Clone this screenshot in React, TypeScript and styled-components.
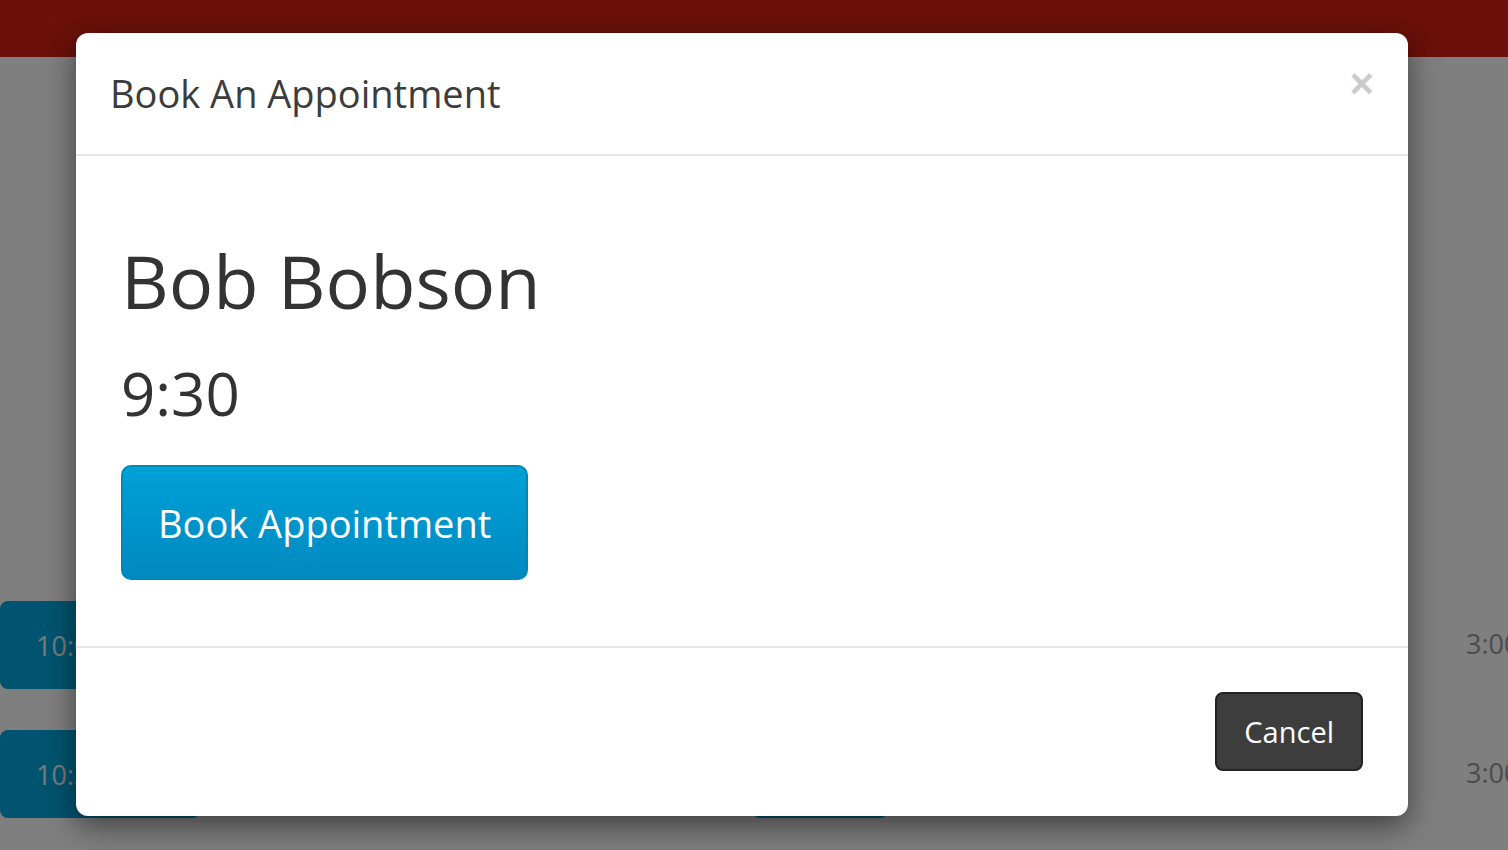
import React from "react";
import styled, { createGlobalStyle } from "styled-components";

const GlobalStyle = createGlobalStyle`
  html, body { margin: 0; padding: 0; }
  body {
    font-family: "Open Sans", "Liberation Sans", sans-serif;
    background: #ffffff;
    color: #333333;
    overflow: hidden;
  }
  * { box-sizing: border-box; }
`;

const Page = styled.div`
  width: 1508px;
  height: 850px;
  position: relative;
  overflow: hidden;
  background: #ffffff;
`;

const TopBar = styled.div`
  height: 57px;
  background: #d62014;
`;

const Slots = styled.div`
  display: flex;
  flex-direction: column;
  gap: 41px;
  padding-top: 544px;
`;

const SlotRow = styled.div`
  display: grid;
  grid-template-columns: 200px 552px 136px 578px 42px;
  height: 88px;
  align-items: center;
`;

const SlotButton = styled.div`
  height: 88px;
  background: #00a8de;
  border-radius: 8px;
  color: #f0f6f8;
  font-size: 27px;
  display: flex;
  align-items: center;
  padding-left: 36px;
`;

const SlotTime = styled.div`
  font-size: 27px;
  color: #999999;
  padding-bottom: 4px;
  white-space: nowrap;
  overflow: hidden;
`;

const Backdrop = styled.div`
  position: absolute;
  inset: 0;
  background: rgba(0, 0, 0, 0.5);
`;

const Dialog = styled.div`
  position: absolute;
  left: 76px;
  top: 33px;
  width: 1332px;
  height: 783px;
  background: #ffffff;
  border-radius: 12px;
  box-shadow: 0 10px 30px rgba(0, 0, 0, 0.5);
  display: flex;
  flex-direction: column;
`;

const Header = styled.div`
  height: 123px;
  flex: none;
  border-bottom: 2px solid #e5e5e5;
  display: flex;
  align-items: center;
  justify-content: space-between;
  padding: 0 34px 0 34px;
`;

const Title = styled.h4`
  margin: 0;
  font-size: 38px;
  font-weight: 400;
  color: #3c3c3c;
  line-height: 1.2;
`;

const Close = styled.button`
  border: none;
  background: none;
  padding: 0;
  font-family: "Liberation Sans", "Helvetica", sans-serif;
  font-size: 42px;
  font-weight: 700;
  line-height: 1;
  color: #000000;
  opacity: 0.2;
  margin-top: -20px;
`;

const Body = styled.div`
  flex: 1;
  padding: 84px 45px 0 45px;
  display: flex;
  flex-direction: column;
  align-items: flex-start;
`;

const Name = styled.h1`
  margin: 0;
  font-size: 74px;
  font-weight: 400;
  line-height: 1.1;
  color: #333333;
`;

const Time = styled.h2`
  margin: 39px 0 0 0;
  font-size: 60px;
  font-weight: 400;
  line-height: 1.1;
  color: #333333;
`;

const PrimaryButton = styled.button`
  margin-top: 39px;
  height: 115px;
  padding: 0 35px;
  font-family: "Open Sans", "Liberation Sans", sans-serif;
  font-size: 38px;
  color: #ffffff;
  background: linear-gradient(#00a1d7, #0089c0);
  border: 2px solid #0087ba;
  border-radius: 10px;
`;

const Footer = styled.div`
  flex: none;
  height: 170px;
  border-top: 2px solid #e5e5e5;
  display: flex;
  justify-content: flex-end;
  align-items: flex-start;
  padding: 44px 45px 0 0;
`;

const CancelButton = styled.button`
  height: 79px;
  padding: 0 27px;
  font-family: "Open Sans", "Liberation Sans", sans-serif;
  font-size: 29px;
  color: #ffffff;
  background: #3d3d3e;
  border: 2px solid #222222;
  border-radius: 8px;
`;

const slots = [
  { left: "10:00", right: "3:00" },
  { left: "10:30", right: "3:00" },
];

export default function App() {
  return (
    <Page>
      <GlobalStyle />
      <TopBar />
      <Slots>
        {slots.map((s, i) => (
          <SlotRow key={i}>
            <SlotButton>{s.left}</SlotButton>
            <div />
            <SlotButton>11:00</SlotButton>
            <div />
            <SlotTime>{s.right}</SlotTime>
          </SlotRow>
        ))}
      </Slots>
      <Backdrop />
      <Dialog>
        <Header>
          <Title>Book An Appointment</Title>
          <Close aria-label="Close">×</Close>
        </Header>
        <Body>
          <Name>Bob Bobson</Name>
          <Time>9:30</Time>
          <PrimaryButton>Book Appointment</PrimaryButton>
        </Body>
        <Footer>
          <CancelButton>Cancel</CancelButton>
        </Footer>
      </Dialog>
    </Page>
  );
}
